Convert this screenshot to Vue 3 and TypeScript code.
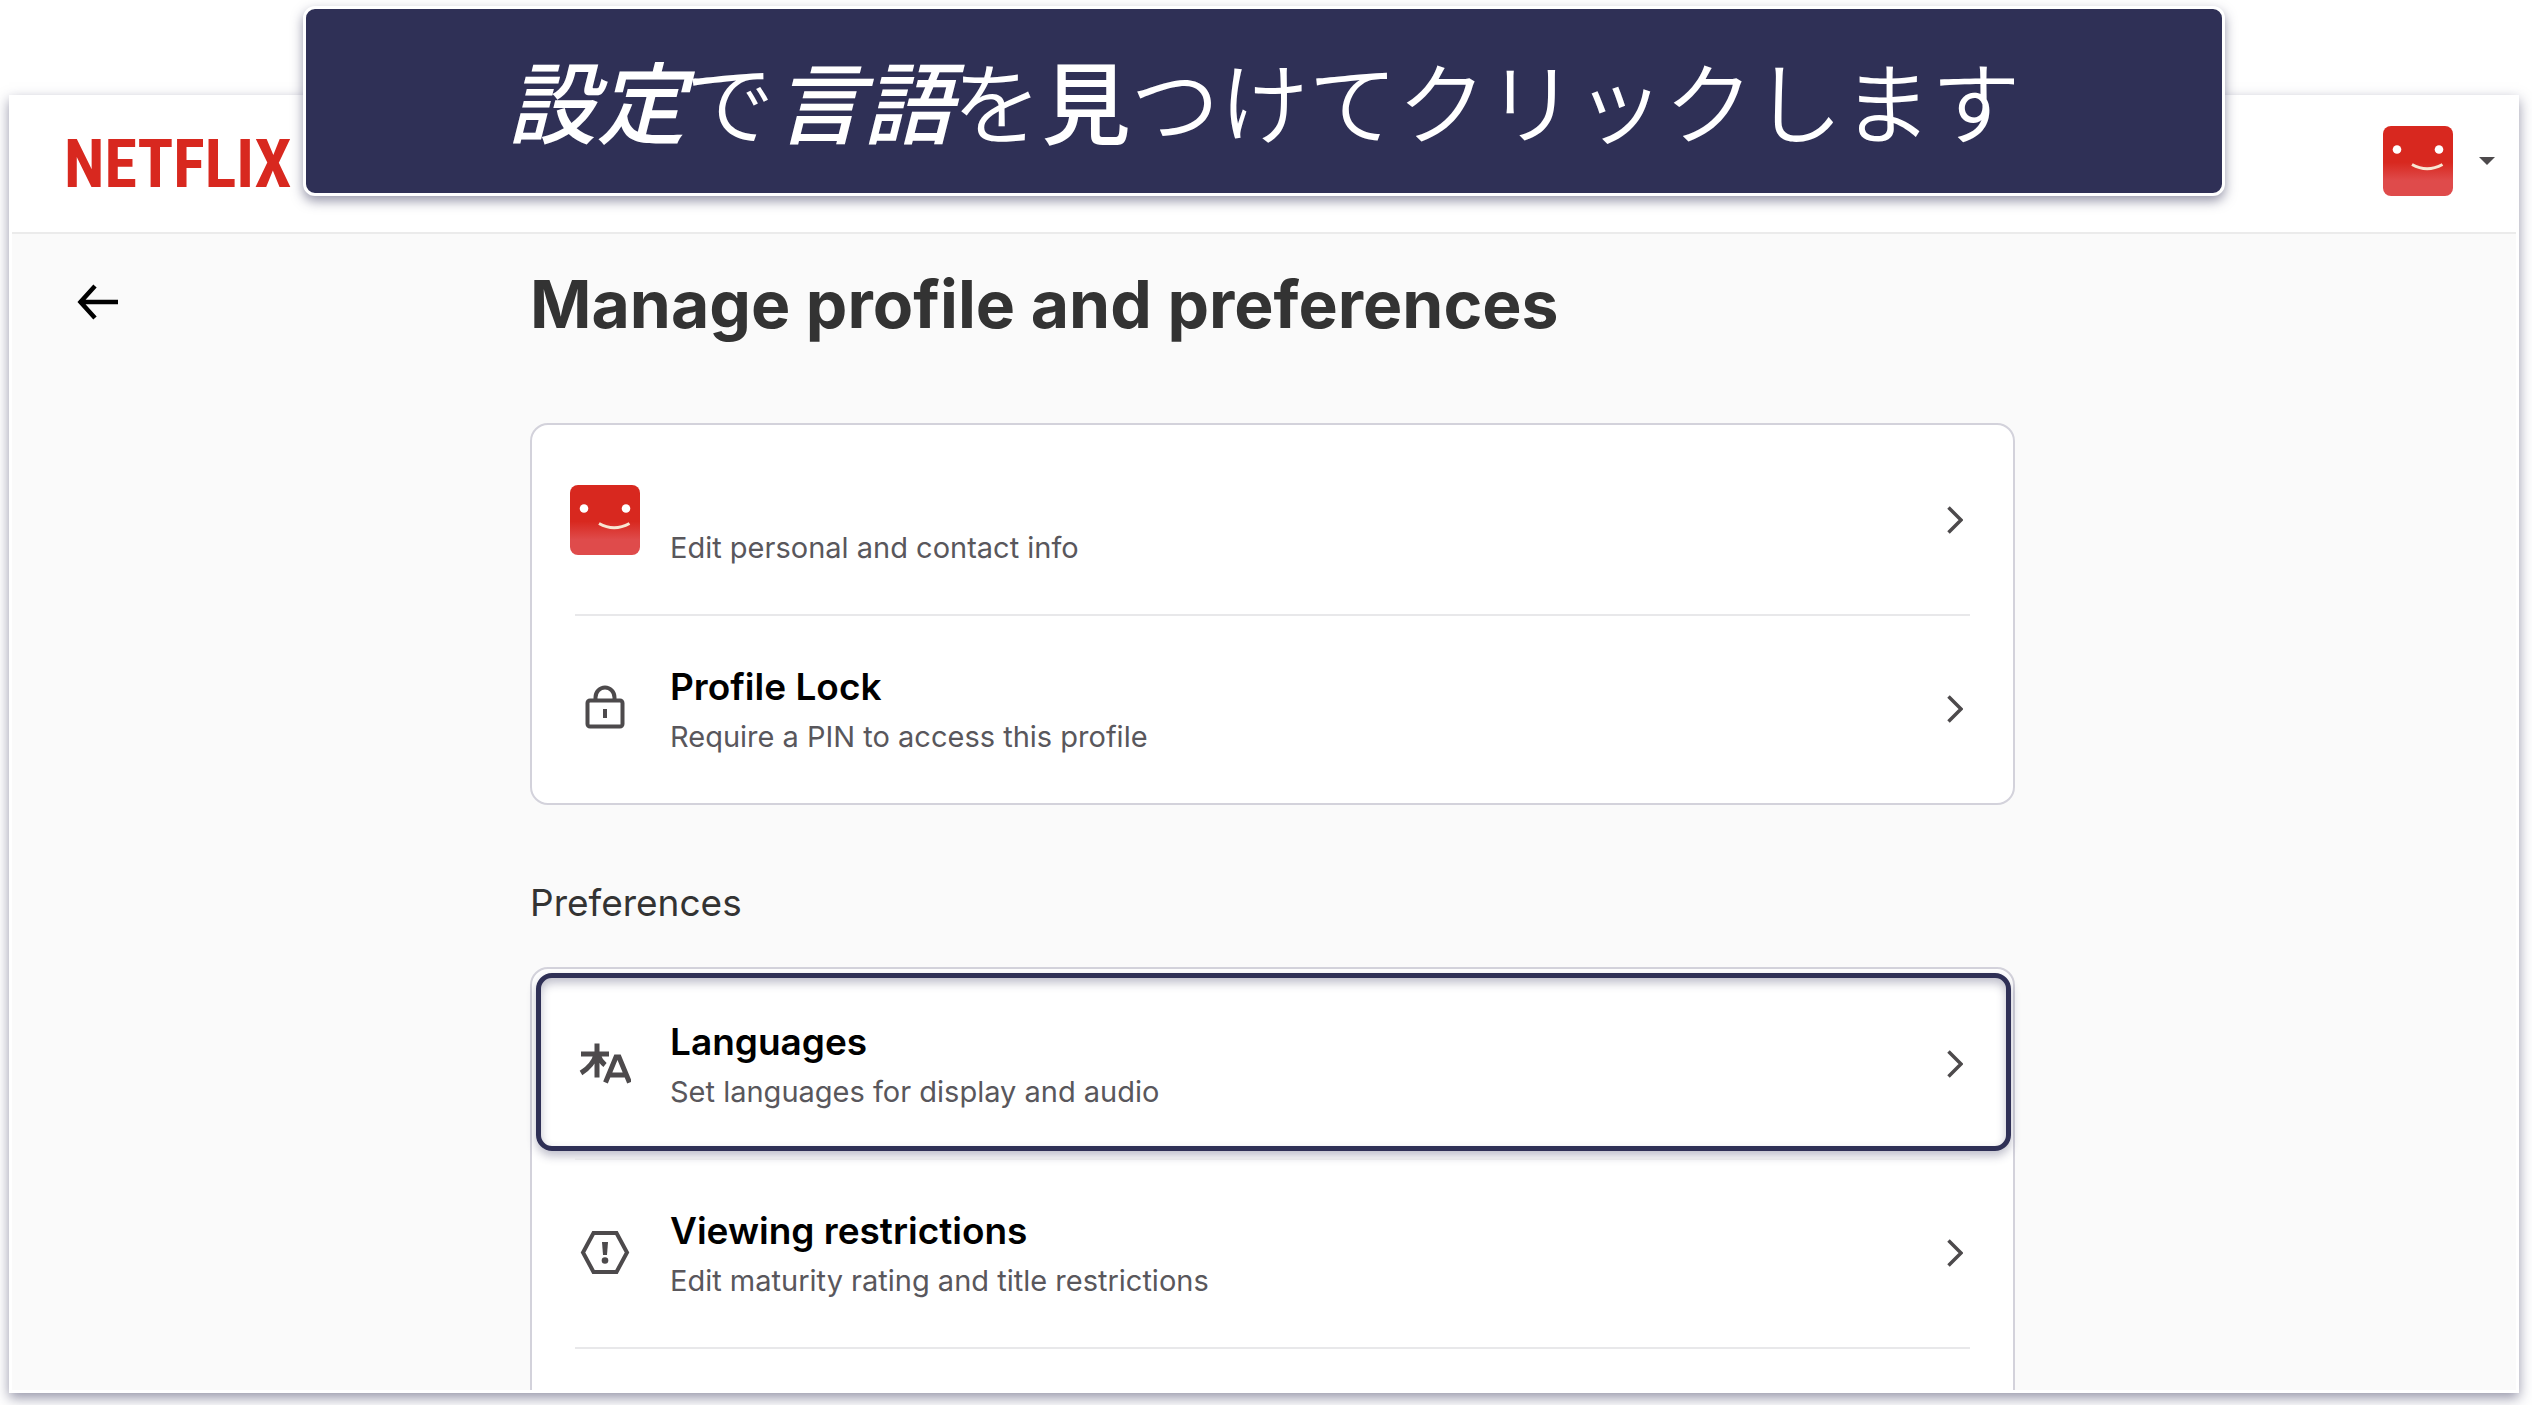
<script setup lang="ts">
interface Row {
  id: string
  icon: 'avatar' | 'lock' | 'language' | 'warning' | 'none'
  title: string
  detail: string
  highlighted?: boolean
}

const profileRows: Row[] = [
  { id: 'profile', icon: 'avatar', title: '', detail: 'Edit personal and contact info' },
  { id: 'lock', icon: 'lock', title: 'Profile Lock', detail: 'Require a PIN to access this profile' },
]

const preferenceRows: Row[] = [
  { id: 'languages', icon: 'language', title: 'Languages', detail: 'Set languages for display and audio', highlighted: true },
  { id: 'restrictions', icon: 'warning', title: 'Viewing restrictions', detail: 'Edit maturity rating and title restrictions' },
  { id: 'more', icon: 'none', title: '', detail: '' },
]

const groups = [
  { id: 'account', heading: '', rows: profileRows },
  { id: 'preferences', heading: 'Preferences', rows: preferenceRows },
]
</script>

<template>
  <div class="page">
    <div class="banner" lang="ja">
      <p><em>設定</em>で<em>言語</em>を<b>見</b>つけてクリックします</p>
    </div>

    <div class="frame">
      <header class="topbar">
        <a class="brand" href="#home">NETFLIX</a>
        <button class="account" type="button" aria-label="Account menu">
          <svg class="avatar" viewBox="0 0 70 70" aria-hidden="true">
            <defs>
              <linearGradient id="face-top" x1="0" y1="0" x2="0" y2="1">
                <stop offset="0.52" stop-color="#d8281f" />
                <stop offset="0.78" stop-color="#df4b4b" />
              </linearGradient>
            </defs>
            <rect width="70" height="70" rx="8" fill="url(#face-top)" />
            <circle cx="14" cy="23.5" r="4.3" fill="#fff" />
            <circle cx="56" cy="23.5" r="4.3" fill="#fff" />
            <path d="M29 38.5Q44 47 59.5 38.5" fill="none" stroke="#f8e6d2" stroke-width="3" />
          </svg>
          <svg class="caret" viewBox="0 0 18 10" aria-hidden="true"><path d="M1 1h16L9 9z" fill="#4d4a4c" /></svg>
        </button>
      </header>

      <div class="content">
        <a class="back" href="#account" aria-label="Back">
          <svg viewBox="0 0 42 36" fill="none" stroke="#000" stroke-width="4.5" aria-hidden="true">
            <path d="M41 18H4M18 2L3.5 18L18 34" />
          </svg>
        </a>

        <main>
          <h1>Manage profile and preferences</h1>

          <section v-for="group in groups" :key="group.id" class="group">
            <h2 v-if="group.heading">{{ group.heading }}</h2>
            <ul class="card">
              <li v-for="row in group.rows" :key="row.id" :class="{ highlighted: row.highlighted }">
                <a v-if="row.icon !== 'none'" class="row" :href="'#' + row.id">
                  <span class="icon">
                    <svg v-if="row.icon === 'avatar'" class="avatar" viewBox="0 0 70 70" aria-hidden="true">
                      <rect width="70" height="70" rx="8" fill="url(#face-top)" />
                      <circle cx="14" cy="23.5" r="4.3" fill="#fff" />
                      <circle cx="56" cy="23.5" r="4.3" fill="#fff" />
                      <path d="M29 38.5Q44 47 59.5 38.5" fill="none" stroke="#f8e6d2" stroke-width="3" />
                    </svg>
                    <svg v-else-if="row.icon === 'lock'" class="glyph" viewBox="0 0 52 52" fill="none" stroke="#4d4a4c" stroke-width="4" aria-hidden="true">
                      <rect x="8.5" y="17.5" width="35" height="26" rx="2.5" />
                      <path d="M16.5 17.5v-3a9.5 10 0 0 1 19 0v3M26 26v9" />
                    </svg>
                    <svg v-else-if="row.icon === 'language'" class="glyph" viewBox="0 0 52 52" fill="none" stroke="#4d4a4c" stroke-width="5" aria-hidden="true">
                      <path d="M2 16h28M18 5.5v34M17 17C14.500 25 8.500 31 2 35M19 17c1.500 4 4 7.500 7 10" />
                      <path d="M26.500 44.500L37 19h3L50.500 44.500M30.500 37h16" />
                    </svg>
                    <svg v-else class="glyph" viewBox="0 0 52 52" fill="none" stroke="#4d4a4c" stroke-width="4" aria-hidden="true">
                      <path d="M14.5 6h23L48 25.500L37.500 45h-23L4 25.500z" />
                      <path d="M23 15h6l-1 13h-4z" fill="#4d4a4c" stroke="none" />
                      <circle cx="26" cy="33.5" r="3.3" fill="#4d4a4c" stroke="none" />
                    </svg>
                  </span>
                  <span class="text">
                    <span class="title">{{ row.title }}</span>
                    <span class="detail">{{ row.detail }}</span>
                  </span>
                  <svg class="chevron" viewBox="0 0 16 28" fill="none" stroke="#4d4a4c" stroke-width="3.5" aria-hidden="true">
                    <path d="M1.5 1.5L14 14L1.5 26.5" />
                  </svg>
                </a>
                <div v-else class="row"></div>
              </li>
            </ul>
          </section>
        </main>
      </div>
    </div>
  </div>
</template>

<style>
body {
  margin: 0;
  background: #fff;
}
</style>

<style scoped>
.page {
  position: relative;
  box-sizing: border-box;
  height: 100vh;
  padding: 95px 13px 12px 9px;
  overflow: hidden;
  font-family: Inter, "Liberation Sans", sans-serif;
}

.frame {
  box-sizing: border-box;
  height: 100%;
  overflow: hidden;
  border: 3px solid #fff;
  background: #fafafa;
  box-shadow: 0 5px 12px rgba(47, 48, 86, 0.5);
}

.banner {
  position: absolute;
  z-index: 1;
  top: 6px;
  left: 303px;
  right: 307px;
  display: flex;
  align-items: center;
  justify-content: center;
  box-sizing: border-box;
  height: 190px;
  padding-bottom: 4px;
  border: 3px solid #fff;
  border-radius: 12px;
  background: #2f3056;
  box-shadow: 0 5px 12px rgba(47, 48, 86, 0.5);
}

.banner p {
  margin: 0;
  color: #fff;
  font: 350 89px/128px "Noto Sans CJK JP", sans-serif;
  white-space: nowrap;
}

.banner em,
.banner b {
  font-weight: 500;
}

.topbar {
  display: flex;
  align-items: center;
  justify-content: space-between;
  height: 134px;
  padding: 0 20px 0 52px;
  border-bottom: 2px solid #ebebeb;
  background: #fff;
}

.brand {
  color: #d8281f;
  font: bold 66px/72px "Liberation Sans Narrow", "Roboto Condensed", "Open Sans Condensed", "DejaVu Sans Condensed", sans-serif;
  text-decoration: none;
}

.account {
  display: flex;
  align-items: center;
  gap: 25px;
  padding: 0 0 8px;
  border: 0;
  background: none;
}

.avatar {
  display: block;
  width: 70px;
  height: 70px;
}

.caret {
  width: 18px;
  height: 10px;
}

.content {
  display: grid;
  grid-template-columns: 518px minmax(0, 1fr) 501px;
}

.back {
  justify-self: start;
  margin: 50px 0 0 65px;
}

.back svg {
  display: block;
  width: 42px;
  height: 36px;
}

h1 {
  margin: 32px 0 0;
  padding-bottom: 7px;
  color: #333;
  font-size: 66px;
  font-weight: 700;
  line-height: 76px;
}

h2 {
  margin: 0 0 40px;
  color: #333;
  font-size: 37px;
  font-weight: 400;
  line-height: 48px;
}

.group {
  margin-top: 74px;
}

.card {
  margin: 0;
  padding: 0;
  border: 2px solid #d3d2db;
  border-radius: 18px;
  background: #fff;
  list-style: none;
}

.card li {
  position: relative;
}

.card li + li::before {
  content: "";
  position: absolute;
  top: 0;
  left: 43px;
  right: 43px;
  height: 2px;
  background: #e8e8ea;
}

.row {
  display: flex;
  align-items: center;
  gap: 30px;
  height: 189px;
  padding: 0 50px 0 38px;
  color: #000;
  text-decoration: none;
}

.highlighted::after {
  content: "";
  position: absolute;
  inset: 4px 2px 7px 4px;
  border: 5px solid #2f3056;
  border-radius: 16px;
  box-shadow: 0 5px 10px rgba(47, 48, 86, 0.3), inset 0 5px 10px rgba(47, 48, 86, 0.3);
  pointer-events: none;
}

.icon {
  display: flex;
  justify-content: center;
  width: 70px;
}

.glyph {
  width: 52px;
  height: 52px;
}

.text {
  display: flex;
  flex: 1;
  flex-direction: column;
  gap: 2px;
  padding-top: 6px;
}

.title {
  min-height: 48px;
  font-size: 37px;
  font-weight: 600;
  line-height: 48px;
}

.detail {
  color: #59575c;
  font-size: 29px;
  line-height: 48px;
}

.chevron {
  width: 16px;
  height: 28px;
}
</style>
